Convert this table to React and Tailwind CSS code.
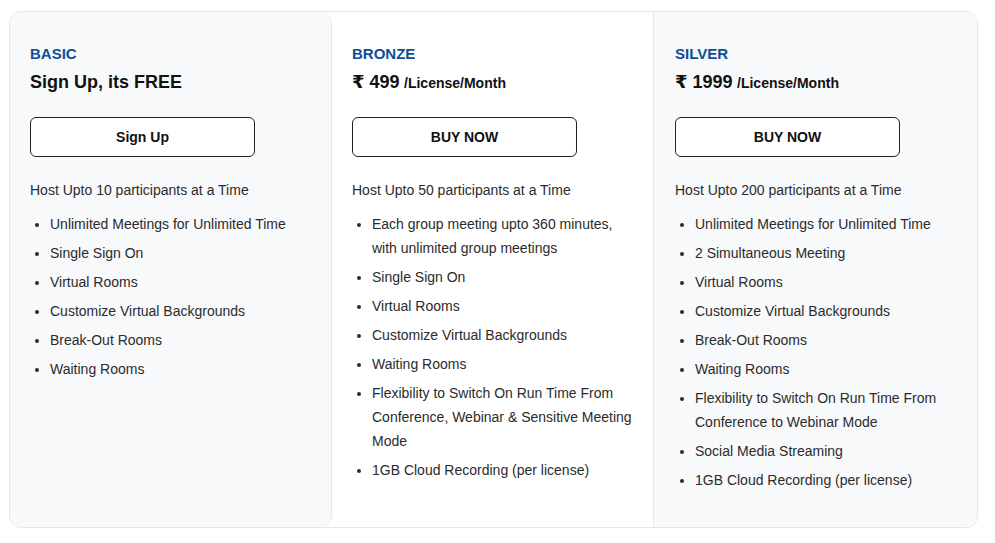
// Pricing — three plan columns with feature lists
import React from "react";

const PLANS = [
  {
    name: "BASIC",
    free: true,
    cta: "Sign Up",
    host: "Host Upto 10 participants at a Time",
    features: [
      "Unlimited Meetings for Unlimited Time",
      "Single Sign On",
      "Virtual Rooms",
      "Customize Virtual Backgrounds",
      "Break-Out Rooms",
      "Waiting Rooms",
    ],
  },
  {
    name: "BRONZE",
    price: "499",
    cta: "BUY NOW",
    host: "Host Upto 50 participants at a Time",
    features: [
      "Each group meeting upto 360 minutes, with unlimited group meetings",
      "Single Sign On",
      "Virtual Rooms",
      "Customize Virtual Backgrounds",
      "Waiting Rooms",
      "Flexibility to Switch On Run Time From Conference, Webinar & Sensitive Meeting Mode",
      "1GB Cloud Recording (per license)",
    ],
  },
  {
    name: "SILVER",
    price: "1999",
    cta: "BUY NOW",
    host: "Host Upto 200 participants at a Time",
    features: [
      "Unlimited Meetings for Unlimited Time",
      "2 Simultaneous Meeting",
      "Virtual Rooms",
      "Customize Virtual Backgrounds",
      "Break-Out Rooms",
      "Waiting Rooms",
      "Flexibility to Switch On Run Time From Conference to Webinar Mode",
      "Social Media Streaming",
      "1GB Cloud Recording (per license)",
    ],
  },
];

const PlanColumn = ({ plan, className }) => (
  <div className={`pb-[30px] pr-3 pt-[33px] ${className}`}>
    <div className="text-[15px] font-semibold leading-[18px] text-[#0b4f96]">
      {plan.name}
    </div>
    <div className="mt-[7px] leading-6 text-[#111]">
      {plan.free ? (
        <span className="text-[18px] font-bold">Sign Up, its FREE</span>
      ) : (
        <span className="font-bold">
          <span className="text-[18px]">₹ {plan.price}</span>{" "}
          <span className="text-[14px]">/License/Month</span>
        </span>
      )}
    </div>
    <button className="mt-[22px] flex h-10 w-[225px] items-center justify-center rounded-[6px] border border-[#222] bg-white text-[14px] font-bold text-[#111]">
      {plan.cta}
    </button>
    <p className="mt-[21px] text-[14px] leading-6 text-[#2b2b2b]">{plan.host}</p>
    <ul className="mt-[10px] list-disc pl-5 text-[14px] leading-6 text-[#2b2b2b]">
      {plan.features.map((f) => (
        <li key={f} className="mb-[5px]">
          {f}
        </li>
      ))}
    </ul>
  </div>
);

const App = () => (
  <div
    className="min-h-[543px] bg-white pl-[9px] pt-[11px]"
    style={{ fontFamily: '"Liberation Sans", Arial, "DejaVu Sans", sans-serif' }}
  >
    <div className="grid w-[969px] grid-cols-[322px_322px_1fr] overflow-hidden rounded-xl border border-[#e4e6ea] bg-white">
      <PlanColumn plan={PLANS[0]} className="rounded-r-xl border-r border-[#e4e6ea] bg-[#f8f9fb] pl-5" />
      <PlanColumn plan={PLANS[1]} className="border-r border-[#e4e6ea] bg-white pl-5" />
      <PlanColumn plan={PLANS[2]} className="bg-[#f8f9fb] pl-[21px]" />
    </div>
  </div>
);

export default App;
